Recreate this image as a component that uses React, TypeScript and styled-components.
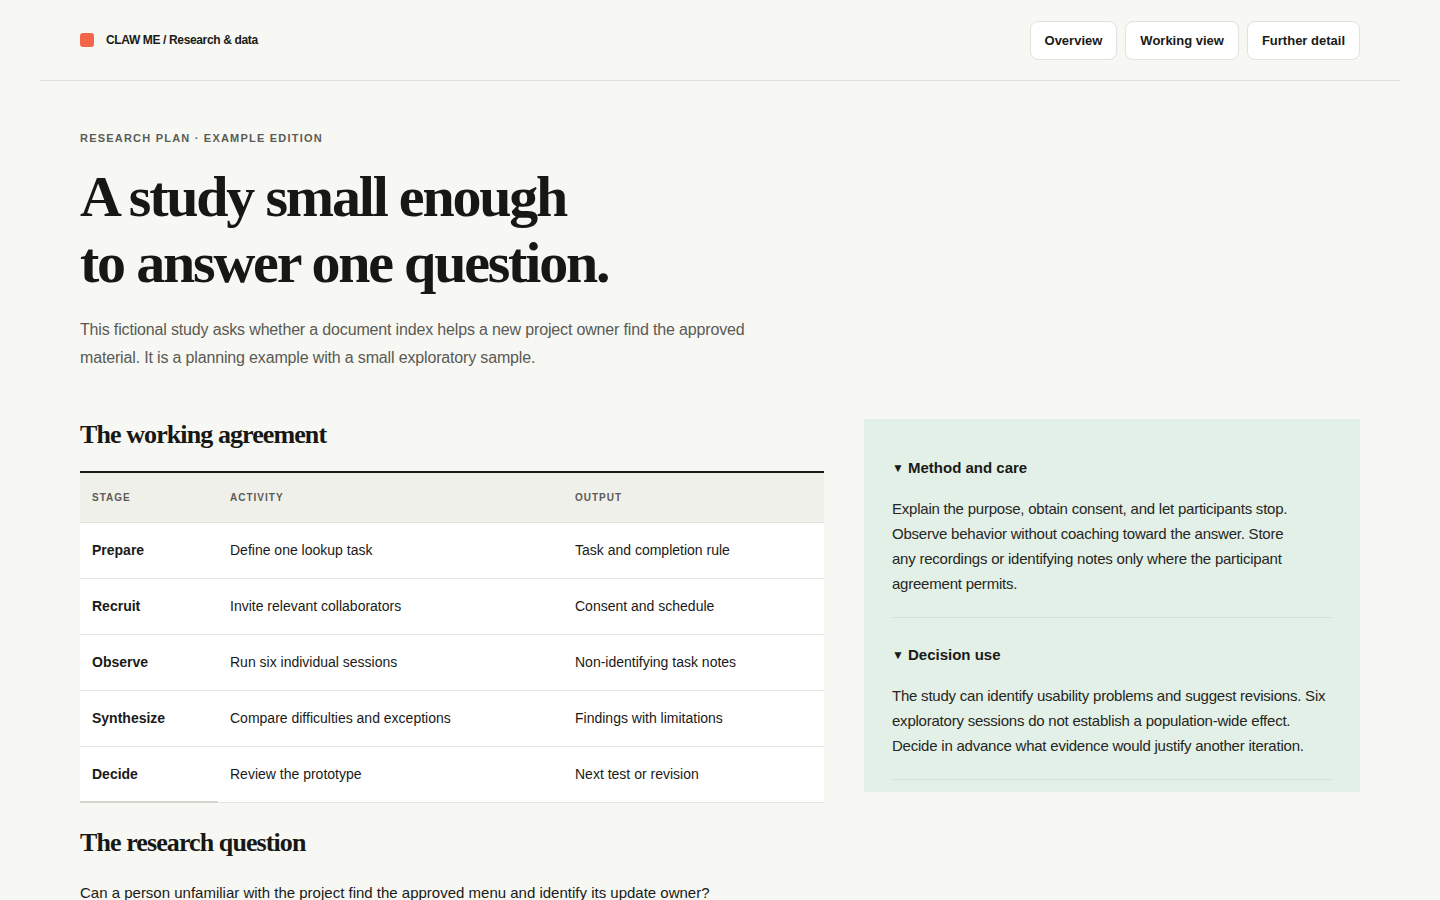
import React from "react";
import styled, { createGlobalStyle } from "styled-components";

const Global = createGlobalStyle`
  * { box-sizing: border-box; }
  html, body { margin: 0; padding: 0; background: #f7f7f3; }
  body { font-family: "Liberation Sans", Arial, sans-serif; color: #1a1a17; }
`;

const serif = `"Liberation Serif", "DejaVu Serif", serif`;

const Page = styled.div`
  padding: 0 40px;
`;

const Header = styled.header`
  display: flex;
  align-items: center;
  justify-content: space-between;
  height: 81px;
  padding: 0 40px;
  border-bottom: 1px solid #e2e2dc;
`;

const Brand = styled.div`
  display: flex;
  align-items: center;
  gap: 12px;
  font-size: 12px;
  font-weight: 700;
  letter-spacing: -0.03em;
`;

const BrandMark = styled.span`
  width: 14px;
  height: 14px;
  border-radius: 3px;
  background: #f2654a;
`;

const Nav = styled.nav`
  display: flex;
  gap: 8px;
`;

const NavButton = styled.button`
  height: 39px;
  padding: 0 14px;
  border: 1px solid #e2e2dc;
  border-radius: 8px;
  background: #ffffff;
  font-family: "Liberation Sans", Arial, sans-serif;
  font-size: 13px;
  font-weight: 700;
  color: #1a1a17;
`;

const Main = styled.main`
  padding: 51px 40px 0;
`;

const Eyebrow = styled.div`
  font-size: 11px;
  font-weight: 700;
  letter-spacing: 0.11em;
  color: #5c5c56;
  text-transform: uppercase;
`;

const Title = styled.h1`
  margin: 20px 0 0;
  font-family: ${serif};
  font-weight: 700;
  font-size: 58px;
  line-height: 66px;
  letter-spacing: -0.038em;
  color: #171714;
`;

const Lede = styled.p`
  margin: 20px 0 0;
  max-width: 690px;
  font-size: 16px;
  line-height: 28px;
  letter-spacing: -0.01em;
  color: #5a5a54;
`;

const Columns = styled.div`
  display: grid;
  grid-template-columns: 744px 496px;
  gap: 40px;
  margin-top: 47px;
  align-items: start;
`;

const Section = styled.section`
  display: flex;
  flex-direction: column;
`;

const H2 = styled.h2<{ $spaced?: boolean }>`
  margin: ${(p) => (p.$spaced ? "24px" : "0")} 0 0;
  font-family: ${serif};
  font-weight: 700;
  font-size: 26px;
  line-height: 32px;
  letter-spacing: -0.035em;
  color: #171714;
`;

const Table = styled.table`
  width: 100%;
  margin-top: 20px;
  border-collapse: collapse;
  border-top: 2px solid #1a1a17;
`;

const Th = styled.th`
  height: 50px;
  padding: 0 12px;
  background: #f0f0eb;
  text-align: left;
  font-size: 10px;
  font-weight: 700;
  letter-spacing: 0.1em;
  color: #5c5c56;
  text-transform: uppercase;
  border-bottom: 1px solid #e2e2dc;
`;

const Td = styled.td<{ $strong?: boolean; $lastStage?: boolean }>`
  height: 56px;
  padding: 0 12px;
  background: #ffffff;
  font-size: 14px;
  font-weight: ${(p) => (p.$strong ? 700 : 400)};
  color: #1a1a17;
  border-bottom: ${(p) => (p.$lastStage ? "2px solid #d6d6cf" : "1px solid #e6e6e1")};
`;

const Question = styled.p`
  margin: 25px 0 0;
  font-size: 15px;
  color: #1a1a17;
`;

const Aside = styled.aside`
  background: #e3f0e7;
  padding: 40px 28px 12px;
`;

const Details = styled.details`
  border-bottom: 1px solid #d5e2d9;
  padding-bottom: 21px;
  & + & {
    margin-top: 28px;
  }
`;

const Summary = styled.summary`
  list-style: none;
  display: flex;
  align-items: center;
  gap: 5px;
  font-size: 15px;
  font-weight: 700;
  cursor: pointer;
  &::-webkit-details-marker { display: none; }
`;

const Caret = styled.span`
  font-size: 12px;
  width: 11px;
`;

const DetailText = styled.p<{ $narrow?: boolean }>`
  margin: 20px 0 0;
  max-width: ${(p) => (p.$narrow ? "410px" : "none")};
  font-size: 15px;
  line-height: 25px;
  letter-spacing: -0.015em;
  color: #262622;
`;

const rows = [
  ["Prepare", "Define one lookup task", "Task and completion rule"],
  ["Recruit", "Invite relevant collaborators", "Consent and schedule"],
  ["Observe", "Run six individual sessions", "Non-identifying task notes"],
  ["Synthesize", "Compare difficulties and exceptions", "Findings with limitations"],
  ["Decide", "Review the prototype", "Next test or revision"],
];

export default function App() {
  return (
    <>
      <Global />
      <Page>
        <Header>
          <Brand>
            <BrandMark />
            <span>CLAW ME / Research &amp; data</span>
          </Brand>
          <Nav>
            <NavButton>Overview</NavButton>
            <NavButton>Working view</NavButton>
            <NavButton>Further detail</NavButton>
          </Nav>
        </Header>
        <Main>
          <Eyebrow>Research plan · Example edition</Eyebrow>
          <Title>
            A study small enough
            <br />
            to answer one question.
          </Title>
          <Lede>
            This fictional study asks whether a document index helps a new project owner find the approved
            material. It is a planning example with a small exploratory sample.
          </Lede>
          <Columns>
            <Section>
              <H2>The working agreement</H2>
              <Table>
                <colgroup>
                  <col style={{ width: "138px" }} />
                  <col style={{ width: "345px" }} />
                  <col />
                </colgroup>
                <thead>
                  <tr>
                    <Th>Stage</Th>
                    <Th>Activity</Th>
                    <Th>Output</Th>
                  </tr>
                </thead>
                <tbody>
                  {rows.map((r, i) => (
                    <tr key={r[0]}>
                      <Td $strong $lastStage={i === rows.length - 1}>{r[0]}</Td>
                      <Td>{r[1]}</Td>
                      <Td>{r[2]}</Td>
                    </tr>
                  ))}
                </tbody>
              </Table>
              <H2 $spaced>The research question</H2>
              <Question>
                Can a person unfamiliar with the project find the approved menu and identify its update owner?
              </Question>
            </Section>
            <Aside>
              <Details open>
                <Summary>
                  <Caret>▼</Caret>Method and care
                </Summary>
                <DetailText $narrow>
                  Explain the purpose, obtain consent, and let participants stop. Observe behavior without
                  coaching toward the answer. Store any recordings or identifying notes only where the
                  participant agreement permits.
                </DetailText>
              </Details>
              <Details open>
                <Summary>
                  <Caret>▼</Caret>Decision use
                </Summary>
                <DetailText>
                  The study can identify usability problems and suggest revisions. Six exploratory sessions do
                  not establish a population-wide effect. Decide in advance what evidence would justify another
                  iteration.
                </DetailText>
              </Details>
            </Aside>
          </Columns>
        </Main>
      </Page>
    </>
  );
}
